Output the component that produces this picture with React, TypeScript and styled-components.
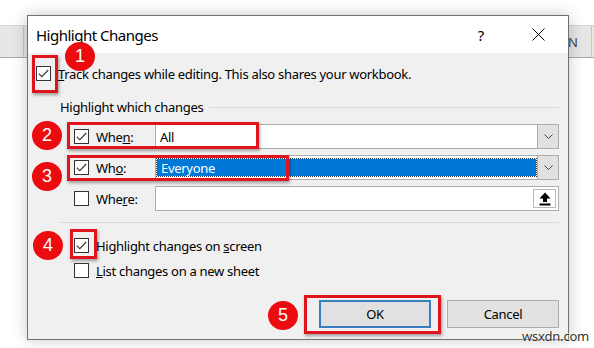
import React from 'react';
import styled, { createGlobalStyle } from 'styled-components';

const GlobalStyle = createGlobalStyle`
    html, body {
        margin: 0;
        padding: 0;
        background: #fff;
    }
    body {
        font-family: "Noto Sans", "Open Sans", sans-serif;
        color: #000;
    }
`;

const Stage = styled.div`
    position: relative;
    width: 594px;
    height: 348px;
    overflow: hidden;
    background: #fff;
`;

const SheetHeader = styled.div`
    display: flex;
    margin-top: 25px;
    height: 33px;
    box-sizing: border-box;
    background: #e6e6e6;
    border-top: 1px solid #d6d6d6;
    border-bottom: 1px solid #a9a9a9;
    font-family: "Noto Sans", sans-serif;
    font-size: 13px;
    color: #444;
`;

const HeaderCell = styled.div<{ $w: number }>`
    flex: none;
    width: ${p => p.$w}px;
    display: flex;
    align-items: center;
    justify-content: center;
    border-right: 1px solid #c8c8c8;
`;

const Dialog = styled.div`
    position: absolute;
    left: 27px;
    top: 15px;
    width: 542px;
    height: 325px;
    box-sizing: border-box;
    border: 1px solid #707070;
    background: #f0f0f0;
    box-shadow: 0 0 14px rgba(0, 0, 0, 0.22);
    display: flex;
    flex-direction: column;
`;

const TitleBar = styled.div`
    height: 37px;
    flex: none;
    background: #fff;
    display: flex;
    align-items: center;
    padding: 0 7px 0 8px;
`;

const Title = styled.div`
    flex: 1;
    font-size: 15px;
    letter-spacing: -0.5px;
`;

const TitleButton = styled.div<{ $gap?: number }>`
    width: 46px;
    height: 37px;
    margin-right: ${p => p.$gap ?? 0}px;
    display: flex;
    align-items: center;
    justify-content: center;
    font-size: 15px;
`;

const Body = styled.div`
    flex: 1;
    display: flex;
    flex-direction: column;
    padding: 0 9px 11px 8px;
    font-size: 13px;
    letter-spacing: -0.3px;
`;

const CheckRow = styled.div<{ $indent: number; $top: number }>`
    display: flex;
    align-items: center;
    gap: 7px;
    height: 25px;
    margin-top: ${p => p.$top}px;
    padding-left: ${p => p.$indent}px;
    white-space: nowrap;
`;

const Box = styled.div`
    flex: none;
    width: 15px;
    height: 15px;
    box-sizing: border-box;
    border: 1px solid #333;
    background: #fff;
    display: flex;
    align-items: center;
    justify-content: center;
`;

const GroupHeader = styled.div`
    display: flex;
    align-items: center;
    gap: 6px;
    margin-top: 12px;
    padding-left: 24px;
    height: 18px;
    white-space: nowrap;
`;

const Rule = styled.div`
    flex: 1;
    border-top: 1px solid #dadada;
`;

const FieldRow = styled.div<{ $top: number }>`
    display: flex;
    align-items: center;
    height: 25px;
    margin-top: ${p => p.$top}px;
    padding-left: 38px;
`;

const FieldLabel = styled.div`
    flex: none;
    width: 81px;
    display: flex;
    align-items: center;
    gap: 7px;
`;

const Field = styled.div`
    flex: 1;
    height: 25px;
    box-sizing: border-box;
    border: 1px solid #acacac;
    background: #fff;
    display: flex;
    align-items: stretch;
`;

const FieldText = styled.div<{ $selected?: boolean }>`
    flex: 1;
    display: flex;
    align-items: center;
    padding-left: 4px;
    margin: ${p => (p.$selected ? '3px 1px 3px 1px' : '0')};
    background: ${p => (p.$selected ? '#0078d7' : 'transparent')};
    color: ${p => (p.$selected ? '#fff' : '#000')};
    outline: ${p => (p.$selected ? '1px dotted #333' : 'none')};
`;

const DropButton = styled.div`
    flex: none;
    width: 21px;
    box-sizing: border-box;
    background: #e1e1e1;
    border-left: 1px solid #acacac;
    display: flex;
    align-items: center;
    justify-content: center;
`;

const RefButton = styled.div`
    flex: none;
    width: 23px;
    margin: 2px;
    box-sizing: border-box;
    border: 1px solid #b9b9b9;
    background: #fff;
    display: flex;
    align-items: center;
    justify-content: center;
`;

const Separator = styled.div`
    margin: 11px 0 0 24px;
    border-top: 1px solid #dadada;
`;

const ButtonRow = styled.div`
    margin-top: auto;
    display: flex;
    justify-content: flex-end;
    gap: 16px;
`;

const Button = styled.div<{ $primary?: boolean }>`
    width: 112px;
    height: 28px;
    box-sizing: border-box;
    background: #e1e1e1;
    border: ${p => (p.$primary ? '2px solid #3a7cc0' : '1px solid #adadad')};
    display: flex;
    align-items: center;
    justify-content: center;
`;

const Mark = styled.div<{ $x: number; $y: number; $w: number; $h: number }>`
    position: absolute;
    left: ${p => p.$x}px;
    top: ${p => p.$y}px;
    width: ${p => p.$w}px;
    height: ${p => p.$h}px;
    box-sizing: border-box;
    border: 3px solid #df141c;
    box-shadow: 1px 2px 3px rgba(0, 0, 0, 0.35);
`;

const Badge = styled.div<{ $cx: number; $cy: number }>`
    position: absolute;
    left: ${p => p.$cx - 15}px;
    top: ${p => p.$cy - 14}px;
    width: 30px;
    height: 29px;
    border-radius: 50%;
    background: #ec0c10;
    color: #fff;
    font-family: "Liberation Sans", Arial, sans-serif;
    font-size: 18px;
    display: flex;
    align-items: center;
    justify-content: center;
`;

const Watermark = styled.div`
    position: absolute;
    left: 522px;
    top: 327px;
    font-family: "Noto Sans", sans-serif;
    font-size: 13px;
    letter-spacing: -0.2px;
    color: #333;
    text-shadow: 0 0 2px #fff, 0 0 2px #fff;
`;

const Check = () => (
    <svg width="11" height="9" viewBox="0 0 11 9">
        <path d="M0.8 4.6 L3.8 7.6 L10.2 1" fill="none" stroke="#333" strokeWidth="1.1" />
    </svg>
);

const CheckBox: React.FC<{ checked?: boolean }> = ({ checked }) => <Box>{checked && <Check />}</Box>;

const Chevron = () => (
    <svg width="9" height="5" viewBox="0 0 9 5">
        <path d="M0.5 0.5 L4.5 4.5 L8.5 0.5" fill="none" stroke="#444" strokeWidth="1" />
    </svg>
);

const CollapseIcon = () => (
    <svg width="12" height="14" viewBox="0 0 12 14">
        <path d="M6 0.5 L11.5 6.5 L8 6.5 L8 10 L4 10 L4 6.5 L0.5 6.5 Z" fill="#000" />
        <rect x="0.5" y="11.5" width="11" height="2" fill="#000" />
    </svg>
);

const CloseIcon = () => (
    <svg width="13" height="13" viewBox="0 0 13 13">
        <path d="M0.5 0.5 L12.5 12.5 M12.5 0.5 L0.5 12.5" stroke="#000" strokeWidth="1" />
    </svg>
);

export default function App() {
    return (
        <Stage>
            <GlobalStyle />
            <SheetHeader>
                <HeaderCell $w={23} />
                <HeaderCell $w={530} />
                <HeaderCell $w={36}>N</HeaderCell>
            </SheetHeader>

            <Dialog>
                <TitleBar>
                    <Title>Highlight Changes</Title>
                    <TitleButton $gap={11}>?</TitleButton>
                    <TitleButton>
                        <CloseIcon />
                    </TitleButton>
                </TitleBar>
                <Body>
                    <CheckRow $indent={0} $top={8}>
                        <CheckBox checked />
                        <span>
                            <u>T</u>rack changes while editing. This also shares your workbook.
                        </span>
                    </CheckRow>

                    <GroupHeader>
                        <span>Highlight which changes</span>
                        <Rule />
                    </GroupHeader>

                    <FieldRow $top={8}>
                        <FieldLabel>
                            <CheckBox checked />
                            <span>
                                Whe<u>n</u>:
                            </span>
                        </FieldLabel>
                        <Field>
                            <FieldText>All</FieldText>
                            <DropButton>
                                <Chevron />
                            </DropButton>
                        </Field>
                    </FieldRow>

                    <FieldRow $top={6}>
                        <FieldLabel>
                            <CheckBox checked />
                            <span>
                                Wh<u>o</u>:
                            </span>
                        </FieldLabel>
                        <Field>
                            <FieldText $selected>Everyone</FieldText>
                            <DropButton>
                                <Chevron />
                            </DropButton>
                        </Field>
                    </FieldRow>

                    <FieldRow $top={6}>
                        <FieldLabel>
                            <CheckBox />
                            <span>
                                Whe<u>r</u>e:
                            </span>
                        </FieldLabel>
                        <Field>
                            <FieldText />
                            <RefButton>
                                <CollapseIcon />
                            </RefButton>
                        </Field>
                    </FieldRow>

                    <Separator />

                    <CheckRow $indent={38} $top={10}>
                        <CheckBox checked />
                        <span>
                            Highlight changes on <u>s</u>creen
                        </span>
                    </CheckRow>
                    <CheckRow $indent={38} $top={0}>
                        <CheckBox />
                        <span>
                            <u>L</u>ist changes on a new sheet
                        </span>
                    </CheckRow>

                    <ButtonRow>
                        <Button $primary>OK</Button>
                        <Button>Cancel</Button>
                    </ButtonRow>
                </Body>
            </Dialog>

            <Mark $x={32} $y={55} $w={26} $h={38} />
            <Mark $x={67} $y={122} $w={192} $h={27} />
            <Mark $x={67} $y={155} $w={222} $h={26} />
            <Mark $x={70} $y={229} $w={27} $h={30} />
            <Mark $x={304} $y={295} $w={137} $h={39} />

            <Badge $cx={80} $cy={56}>1</Badge>
            <Badge $cx={47} $cy={135}>2</Badge>
            <Badge $cx={47} $cy={176}>3</Badge>
            <Badge $cx={48} $cy={245}>4</Badge>
            <Badge $cx={283} $cy={315}>5</Badge>

            <Watermark>wsxdn.com</Watermark>
        </Stage>
    );
}
